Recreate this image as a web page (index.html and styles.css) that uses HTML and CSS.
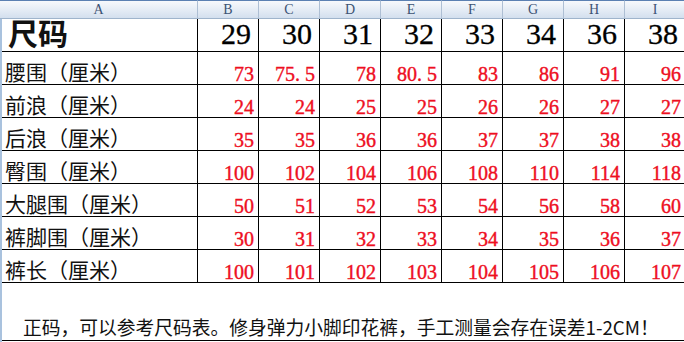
FILE: index.html
```html
<!DOCTYPE html>
<html lang="zh">
<head>
<meta charset="utf-8">
<title>尺码表</title>
<link rel="stylesheet" href="styles.css">
</head>
<body>
<div class="sheet">
  <div class="hd first">A</div><div class="hd">B</div><div class="hd">C</div><div class="hd">D</div><div class="hd">E</div><div class="hd">F</div><div class="hd">G</div><div class="hd">H</div><div class="hd">I</div>

  <div class="c lbl big">尺码</div><div class="c sz">29</div><div class="c sz">30</div><div class="c sz">31</div><div class="c sz">32</div><div class="c sz">33</div><div class="c sz">34</div><div class="c sz">36</div><div class="c sz">38</div>

  <div class="c lbl">腰围（厘米）</div><div class="c n">73</div><div class="c n">75<span class="dot">.</span>5</div><div class="c n">78</div><div class="c n">80<span class="dot">.</span>5</div><div class="c n">83</div><div class="c n">86</div><div class="c n">91</div><div class="c n">96</div>

  <div class="c lbl">前浪（厘米）</div><div class="c n">24</div><div class="c n">24</div><div class="c n">25</div><div class="c n">25</div><div class="c n">26</div><div class="c n">26</div><div class="c n">27</div><div class="c n">27</div>

  <div class="c lbl">后浪（厘米）</div><div class="c n">35</div><div class="c n">35</div><div class="c n">36</div><div class="c n">36</div><div class="c n">37</div><div class="c n">37</div><div class="c n">38</div><div class="c n">38</div>

  <div class="c lbl">臀围（厘米）</div><div class="c n">100</div><div class="c n">102</div><div class="c n">104</div><div class="c n">106</div><div class="c n">108</div><div class="c n">110</div><div class="c n">114</div><div class="c n">118</div>

  <div class="c lbl">大腿围（厘米）</div><div class="c n">50</div><div class="c n">51</div><div class="c n">52</div><div class="c n">53</div><div class="c n">54</div><div class="c n">56</div><div class="c n">58</div><div class="c n">60</div>

  <div class="c lbl">裤脚围（厘米）</div><div class="c n">30</div><div class="c n">31</div><div class="c n">32</div><div class="c n">33</div><div class="c n">34</div><div class="c n">35</div><div class="c n">36</div><div class="c n">37</div>

  <div class="c lbl">裤长（厘米）</div><div class="c n">100</div><div class="c n">101</div><div class="c n">102</div><div class="c n">103</div><div class="c n">104</div><div class="c n">105</div><div class="c n">106</div><div class="c n">107</div>

  <div class="c note">正码，可以参考尺码表。修身弹力小脚印花裤，手工测量会存在误差1-2CM！</div>
</div>
</body>
</html>
```

FILE: styles.css
```css
html, body {
  margin: 0;
  padding: 0;
  background: #ffffff;
}

.sheet {
  display: grid;
  grid-template-columns: 196px repeat(8, 61px);
  grid-template-rows: 19px repeat(8, 33px) 58px;
  width: 684px;
  height: 342px;
  box-sizing: border-box;
  border-left: 2px solid #a9c2de;
}

.hd {
  box-sizing: border-box;
  border-top: 1px solid #5b80b2;
  border-right: 1px solid #aebfd4;
  border-bottom: 1px solid #9fb4cc;
  background: linear-gradient(#f7f9fc, #e2eaf4 60%, #d3dfee);
  color: #3c5273;
  font-family: "Liberation Serif", "DejaVu Serif", serif;
  font-size: 14px;
  line-height: 17px;
  text-align: center;
}

.hd.first {
  margin-left: -2px;
}

.c {
  box-sizing: border-box;
  border-right: 1px solid #000;
  border-bottom: 1px solid #000;
  display: flex;
  align-items: flex-end;
  white-space: nowrap;
}

.lbl {
  padding: 0 0 2px 3px;
  font-family: "Noto Sans CJK SC", "Noto Sans", sans-serif;
  font-size: 21px;
  line-height: 21px;
  color: #111;
}

.lbl.big {
  padding: 0 0 4px 6px;
  font-size: 30px;
  line-height: 30px;
  font-weight: bold;
}

.sz {
  justify-content: flex-end;
  padding: 0 7px 2px 0;
  font-family: "Liberation Serif", "DejaVu Serif", serif;
  font-size: 30px;
  line-height: 30px;
  color: #000;
  -webkit-text-stroke: 0.3px #000;
}

.n {
  justify-content: flex-end;
  padding: 0 4px 0 0;
  font-family: "Liberation Serif", "DejaVu Serif", serif;
  font-size: 20px;
  line-height: 20px;
  color: #ee0f1f;
  -webkit-text-stroke: 0.4px #ee0f1f;
}

.dot {
  margin-right: 5px;
}

.note {
  grid-column: 1 / -1;
  padding: 0 0 4px 21px;
  font-family: "Noto Sans CJK SC", "Noto Sans", sans-serif;
  font-size: 18.75px;
  line-height: 19px;
  color: #111;
}
```
